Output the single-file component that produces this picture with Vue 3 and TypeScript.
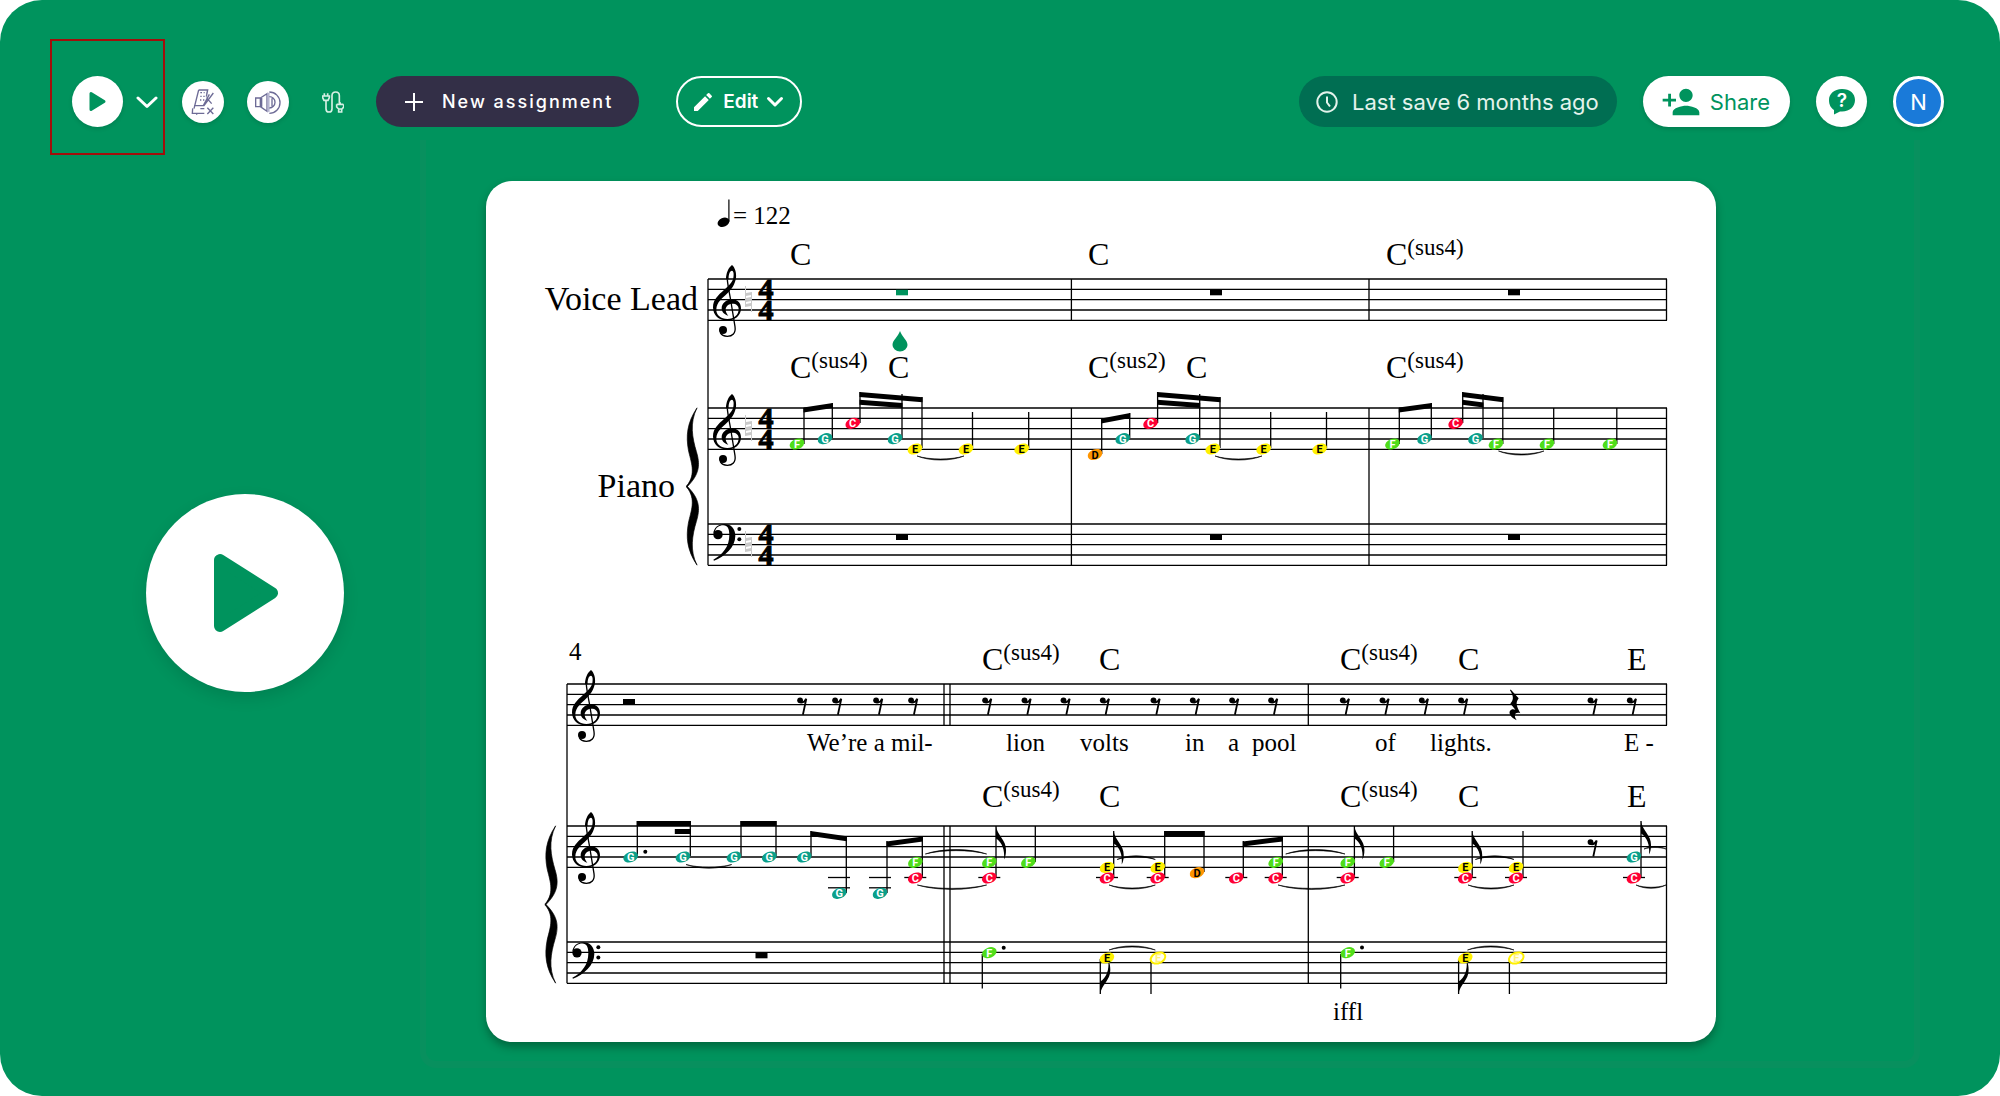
<script setup lang="ts">
type Pitch = 'C' | 'D' | 'E' | 'F' | 'G'
interface Head { p: Pitch; x: number; y: number; hollow?: boolean }
interface Chord { x: number; y: number; root: string; ext?: string }
interface Lyric { x: number; y: number; t: string }
type Seg = [number, number, number, number]

const staves = [
  { x1: 708, x2: 1667, top: 279 },
  { x1: 708, x2: 1667, top: 408 },
  { x1: 708, x2: 1667, top: 524 },
  { x1: 567, x2: 1667, top: 684 },
  { x1: 567, x2: 1667, top: 826 },
  { x1: 567, x2: 1667, top: 942 },
]
const staffGap = 31 / 3
const staffLines: Seg[] = staves.flatMap((s) =>
  [0, 1, 2, 3, 4].map((i): Seg => [s.x1, s.top + i * staffGap, s.x2, s.top + i * staffGap]),
)

const bars: Seg[] = [
  [708, 279, 708, 565.3],
  [567, 684, 567, 983.3],
  ...[1071.4, 1369, 1666.5].flatMap((x): Seg[] => [[x, 279, x, 320.3], [x, 408, x, 565.3]]),
  ...[944, 950, 1308.3, 1666.5].flatMap((x): Seg[] => [[x, 684, x, 725.3], [x, 826, x, 983.3]]),
]

const trebles = [[713, 310], [713, 439], [572, 715], [572, 857]]
const basses = [[713, 534.3], [572, 952.5]]
const ghosts = [286, 415, 531]
const meters = [279, 408, 524]
const braces = [[686.7, 486.5], [545.3, 904.5]]

const wholeRests = [
  { x: 896, y: 289.8, live: true }, { x: 1210, y: 289.8 }, { x: 1508, y: 289.8 },
  { x: 896, y: 534.5 }, { x: 1210, y: 534.5 }, { x: 1508, y: 534.5 },
  { x: 623, y: 699 }, { x: 755.5, y: 952.8 },
]
const eighthRests = [
  797.3, 832.3, 873.3, 908.3, 982.3, 1021.7, 1060.7, 1100, 1150.7, 1190, 1229.3, 1268.3,
  1340, 1379.7, 1419, 1458.3, 1587.7, 1627,
].map((x) => [x, 697.7]).concat([[1587.7, 839.5]])

const heads: Head[] = [
  { p: 'F', x: 797, y: 444 }, { p: 'G', x: 825, y: 438.7 }, { p: 'C', x: 852.7, y: 423.3 },
  { p: 'G', x: 895, y: 438.7 }, { p: 'E', x: 915, y: 449 }, { p: 'E', x: 966, y: 449 }, { p: 'E', x: 1021.7, y: 449 },
  { p: 'D', x: 1095, y: 454.5 }, { p: 'G', x: 1122.7, y: 438.7 }, { p: 'C', x: 1150.5, y: 423.3 },
  { p: 'G', x: 1192.6, y: 438.7 }, { p: 'E', x: 1212.8, y: 449 }, { p: 'E', x: 1263.7, y: 449 }, { p: 'E', x: 1319.7, y: 449 },
  { p: 'F', x: 1392.5, y: 444 }, { p: 'G', x: 1424.5, y: 438.7 }, { p: 'C', x: 1455.6, y: 423.3 },
  { p: 'G', x: 1475.4, y: 438.7 }, { p: 'F', x: 1496, y: 444 }, { p: 'F', x: 1547, y: 444 }, { p: 'F', x: 1610, y: 444 },
  { p: 'G', x: 630.7, y: 857 }, { p: 'G', x: 683, y: 857 }, { p: 'G', x: 734, y: 857 },
  { p: 'G', x: 769.3, y: 857 }, { p: 'G', x: 804.3, y: 857 }, { p: 'G', x: 839.3, y: 893.3 }, { p: 'G', x: 880, y: 893.3 },
  { p: 'F', x: 915.3, y: 862.3 }, { p: 'C', x: 915.3, y: 878 },
  { p: 'F', x: 989.3, y: 862.3 }, { p: 'C', x: 989.3, y: 878 }, { p: 'F', x: 1028.3, y: 862.3 },
  { p: 'E', x: 1107, y: 867.3 }, { p: 'C', x: 1107, y: 878 }, { p: 'E', x: 1157.7, y: 867.3 }, { p: 'C', x: 1157.7, y: 878 },
  { p: 'D', x: 1197, y: 872.7 }, { p: 'C', x: 1236.3, y: 878 }, { p: 'F', x: 1275.7, y: 862.3 }, { p: 'C', x: 1275.7, y: 878 },
  { p: 'F', x: 1347.7, y: 862.3 }, { p: 'C', x: 1347.7, y: 878 }, { p: 'F', x: 1386.7, y: 862.3 },
  { p: 'E', x: 1465.3, y: 867.3 }, { p: 'C', x: 1465.3, y: 878 }, { p: 'E', x: 1516, y: 867.3 }, { p: 'C', x: 1516, y: 878 },
  { p: 'G', x: 1634, y: 857 }, { p: 'C', x: 1634, y: 878 },
  { p: 'F', x: 989.3, y: 952.7 }, { p: 'E', x: 1107, y: 958 }, { p: 'E', x: 1158, y: 958, hollow: true },
  { p: 'F', x: 1347.7, y: 952.7 }, { p: 'E', x: 1465.3, y: 958 }, { p: 'E', x: 1516.3, y: 958, hollow: true },
]

// x, start y, end y
const stems: [number, number, number][] = [
  [804, 444, 408], [832.3, 438, 403], [860, 423, 392], [902, 438, 394], [922, 448, 397], [972.5, 448, 412], [1028.7, 448, 412],
  [1101.7, 454, 419], [1129.7, 438, 413], [1157.6, 423, 392], [1199.7, 438, 394], [1220, 448, 397], [1270.7, 448, 412], [1326.5, 448, 412],
  [1399.3, 444, 408], [1431.3, 438, 403], [1462.7, 423, 392], [1483, 438, 394], [1502.8, 444, 397], [1553.7, 444, 408], [1616.8, 444, 408],
  [637.3, 856, 821], [690.3, 856, 821], [741, 856, 821], [776, 856, 821], [811, 856, 831], [846.3, 893, 836], [887, 893, 841], [922.3, 878, 836],
  [996, 878, 826], [1035.3, 862, 826], [1113.7, 878, 831], [1164.7, 878, 831], [1204, 872, 831], [1243.3, 878, 841], [1282.3, 878, 836],
  [1354.4, 878, 826], [1393.6, 862, 826], [1472.2, 878, 831], [1523, 878, 831], [1641, 878, 821],
  [982.3, 954, 988.5], [1100.3, 959, 994], [1151, 959, 994], [1340.7, 954, 988.5], [1458.6, 959, 994], [1509.4, 959, 994],
]
const beams: Seg[] = [
  [804, 407.5, 832.3, 403], [860, 392, 922, 397.2], [860, 399.7, 902, 403],
  [1101.7, 418.5, 1129.7, 413], [1157.6, 392, 1220, 397.2], [1157.6, 399.7, 1199.7, 403],
  [1399.3, 407.5, 1431.3, 403], [1462.7, 392, 1502.8, 397.2], [1462.7, 399.7, 1483, 402.5],
  [637.3, 821, 690.3, 821], [675.3, 829, 690.3, 829], [741, 821, 776, 821],
  [811, 831, 846.3, 836.3], [887, 841.5, 922.3, 836.5],
  [1164.7, 831, 1204, 831], [1243.3, 841.5, 1282.3, 836.5],
]
const beam = ([a, b, c, d]: Seg): string => `M${a - 0.5},${b} L${c + 0.5},${d} V${d + 5} L${a - 0.5},${b + 5}Z`

const ledgers: [number, number, number][] = [
  [828, 850, 877.5], [828, 850, 887.8], [869, 891, 877.5], [869, 891, 887.8],
  ...[915.3, 989.3, 1107, 1157.7, 1236.3, 1275.7, 1347.7, 1465.3, 1516, 1634].map(
    (x): [number, number, number] => [x - 11, x + 11, 877.5],
  ),
]

// x1, x2, y, bow height (negative bows upwards)
const ties: Seg[] = [
  [917, 964, 456, 4], [1215, 1262, 456, 4], [1498.5, 1544, 451, 4],
  [686, 731.7, 864.5, 3.5], [925.3, 986.7, 854, -4.5], [917.3, 986.7, 885, 4.5],
  [1117, 1155.3, 859.5, -3.5], [1109, 1155.3, 885, 4],
  [1285.7, 1345, 854, -4.5], [1278, 1345, 885, 4.5],
  [1475.3, 1514, 859.5, -3.5], [1468, 1514, 885, 4],
  [1644, 1666, 849, -2], [1636, 1666, 885, 3],
  [1109, 1155.3, 950, -4], [1467.5, 1514, 950, -4],
]
const tie = ([a, c, y, h]: Seg): string => {
  const o = h
  const i = h + (h > 0 ? 1.4 : -1.4)
  const d = (c - a) * 0.28
  return `M${a},${y} C${a + d},${y + o} ${c - d},${y + o} ${c},${y} C${c - d},${y + i} ${a + d},${y + i} ${a},${y}Z`
}

const flagsUp = [[996, 826], [1113.7, 831], [1354.4, 826], [1472.2, 831], [1641, 821]]
const flagsDown = [[1100.3, 994], [1458.6, 994]]
const dots = [[645.3, 851.7], [1003.7, 947.7], [1362, 947.5]]

const chords: Chord[] = [
  { x: 790, y: 265, root: 'C' }, { x: 1088, y: 265, root: 'C' }, { x: 1386, y: 265, root: 'C', ext: '(sus4)' },
  { x: 790, y: 378, root: 'C', ext: '(sus4)' }, { x: 888, y: 378, root: 'C' },
  { x: 1088, y: 378, root: 'C', ext: '(sus2)' }, { x: 1186, y: 378, root: 'C' }, { x: 1386, y: 378, root: 'C', ext: '(sus4)' },
  ...[670, 807].flatMap((y): Chord[] => [
    { x: 982, y, root: 'C', ext: '(sus4)' }, { x: 1099, y, root: 'C' },
    { x: 1340, y, root: 'C', ext: '(sus4)' }, { x: 1458, y, root: 'C' }, { x: 1627, y, root: 'E' },
  ]),
]
const lyrics: Lyric[] = [
  { x: 733, y: 224, t: '= 122' }, { x: 569, y: 660, t: '4' },
  { x: 807, y: 751, t: 'We’re a mil-' }, { x: 1006, y: 751, t: 'lion' }, { x: 1080, y: 751, t: 'volts' },
  { x: 1185, y: 751, t: 'in' }, { x: 1228, y: 751, t: 'a' }, { x: 1252, y: 751, t: 'pool' },
  { x: 1375, y: 751, t: 'of' }, { x: 1430, y: 751, t: 'lights.' }, { x: 1624, y: 751, t: 'E -' },
  { x: 1333, y: 1020, t: 'iffl' },
]
</script>

<template>
  <main class="shell">
    <header class="toolbar">
      <div class="play-group">
        <button class="round play" type="button" aria-label="Play">
          <svg viewBox="0 0 51 51"><path d="M19 17.500v16l13 -8z" /></svg>
        </button>
        <button class="bare" type="button" aria-label="Playback options">
          <svg width="22" height="22" viewBox="0 0 22 22"><path d="M2 7l9 8.500L20 7" class="line" /></svg>
        </button>
      </div>
      <button class="round small" type="button" aria-label="Metronome">
        <svg viewBox="546 240 126 126" class="ink">
          <path d="M596 267h27l-3 12M596 267l-14 56M623 267l-4 20M582 314h30l28-38M610 314l18-34M578 322l-1 15h36M590 337v4M601 323h12M601 275h5M611 275h3M601 286h4M610 286h4M600 297h4M609 297h4M622 320l18 19M640 320l-18 19M619 290l16 18" />
        </svg>
      </button>
      <button class="round small" type="button" aria-label="Sound">
        <svg viewBox="743 240 126 126" class="ink">
          <path d="M769 291h14v26h-14zM783 291l20-13v53l-20-14M787 291v26" />
          <path d="M804 276h6v56h-6z" class="tint" />
          <path d="M810 287a17 17 0 0 1 0 34M818 292v24" />
          <path d="M810 273a31 31 0 0 1 0 64" />
        </svg>
      </button>
      <button class="bare cable" type="button" aria-label="Audio connection">
        <svg width="22" height="22" viewBox="0 0 66 66">
          <path d="M7 7v8M17 7v8M2 15h20v5l-4 8h-12l-4-8zM12 28v25q0 10 9 10t9-10V14q0-11 11-11t11 11v22M44 40h20M44 40v8l6 6h10l5-6v-8M50 54v9h9v-9M50 36h7" />
        </svg>
      </button>
      <button class="pill dark" type="button">
        <svg width="20" height="20" viewBox="0 0 20 20"><path d="M10 1v18M1 10h18" /></svg>
        <span>New assignment</span>
      </button>
      <button class="pill outline" type="button">
        <svg width="24" height="24" viewBox="0 0 24 24"><path d="M3 17.250V21h3.750L17.810 9.940l-3.750-3.750L3 17.250zM20.710 7.040a1 1 0 000-1.410l-2.340-2.340a1 1 0 00-1.410 0l-1.830 1.830 3.750 3.750 1.830-1.830z" fill="#fff" /></svg>
        <span>Edit</span>
        <svg width="18" height="18" viewBox="0 0 18 18"><path d="M2.500 5.500L9 12l6.500-6.500" class="line" /></svg>
      </button>

      <div class="right">
        <div class="pill save">
          <svg width="24" height="24" viewBox="0 0 24 24"><circle cx="12" cy="12" r="9.700" /><path d="M12 6.500v6l3 4" /></svg>
          <span>Last save 6 months ago</span>
        </div>
        <button class="pill share" type="button">
          <svg width="40" height="40" viewBox="0 0 24 24"><path d="M15 12c2.210 0 4-1.790 4-4s-1.790-4-4-4-4 1.790-4 4 1.790 4 4 4zm-9-2V7H4.300v3H1v1.700h3.300v3H6v-3h3V10H6zm9 4.200c-2.670 0-8 1.340-8 4V20h16v-1.800c0-2.660-5.330-4-8-4z" /></svg>
          <span>Share</span>
        </button>
        <button class="round help" type="button" aria-label="Help">
          <svg viewBox="0 0 51 51">
            <path d="M26 13c-8 0-13 5-13 11 0 5 2 8 5 10v4.500l6-3h2c8 0 13-5 13-11.500S34 13 26 13z" />
            <text x="26" y="31" text-anchor="middle">?</text>
          </svg>
        </button>
        <button class="round avatar" type="button">N</button>
      </div>
    </header>

    <section class="stage">
      <div class="side">
        <button class="round big" type="button" aria-label="Play score">
          <svg viewBox="0 0 198 198"><path d="M74 66v66l52-33z" /></svg>
        </button>
      </div>
      <article class="sheet">
        <svg class="score" viewBox="486 181 1230 861" role="img" aria-label="Voice Lead and Piano score">
          <defs>
            <g id="treble">
              <path d="M57,-135 C66,-128 71,-110 69,-97 C66,-76 55,-62 44,-51 C28,-35 11,-24 10,-2 C9,16 24,27 43,27 C64,27 77,14 77,-3 C77,-13 69,-19 59,-19 C46,-19 38,-11 38,-1 C38,6 42,12 46,17 C34,14 26,6 26,-5 C26,-20 40,-32 58,-32 C73,-32 84,-21 84,-5 C84,17 66,32 42,32 C18,32 0,16 0,-8 C0,-32 18,-46 32,-59 C46,-72 58,-82 61,-96 C63,-108 62,-117 57,-118 C50,-118 46,-105 47,-92 L39,-92 C39,-110 46,-127 57,-135Z" />
              <path d="M43,-92 C44,-75 50,-48 53,-30 L66,50 C69,70 58,79 43,79 C32,79 25,74 22,68" fill="none" stroke="#000" stroke-width="4" />
              <circle cx="30" cy="60" r="12" />
            </g>
            <g id="bass">
              <path d="M1,-2 C2,-20 16,-31 34,-31 C54,-31 67,-17 67,4 C67,40 35,66 3,79 L1,76 C30,60 49,36 49,2 C49,-16 44,-27 31,-27 C18,-27 8,-20 6,-8Z" />
              <circle cx="15" cy="1" r="14" /><circle cx="79" cy="-16" r="6" /><circle cx="79" cy="15" r="6" />
            </g>
            <path id="half-brace" d="M31,-236 C0,-190 -2,-150 5,-110 C12,-75 30,-38 0,-2 L0,2 C41,-38 40,-68 29,-105 C17,-145 8,-190 31,-236Z" stroke="#000" stroke-width="2" />
            <g id="eighth">
              <circle cx="2.800" cy="2.600" r="2.900" />
              <path d="M2,4.200 Q6.500,6.200 9,1 L5.600,17" fill="none" stroke="#000" stroke-width="1.800" />
            </g>
            <path id="flag" d="M0,0 C1,9 10.300,14 10,24 C10,28 9.500,31 8,33.500 C9,24 6,16 0,12.500Z" />
            <path id="ghost" d="M0,0h1v7l6,-1v20h-1v-6l-6,1zM1,10v2l5,-1v-2zM1,16v2l5,-1v-2z" />
          </defs>

          <g class="lines">
            <line v-for="(l, i) in staffLines" :key="'s' + i" :x1="l[0]" :y1="l[1]" :x2="l[2]" :y2="l[3]" />
            <line v-for="(l, i) in bars" :key="'b' + i" :x1="l[0]" :y1="l[1]" :x2="l[2]" :y2="l[3]" />
            <line v-for="(l, i) in ledgers" :key="'l' + i" :x1="l[0]" :y1="l[2]" :x2="l[1]" :y2="l[2]" />
            <line v-for="(s, i) in stems" :key="'t' + i" :x1="s[0]" :y1="s[1]" :x2="s[0]" :y2="s[2]" />
          </g>

          <use v-for="(g, i) in ghosts" :key="'g' + i" href="#ghost" :x="745" :y="g" fill="#c9c9c9" />
          <use v-for="(t, i) in trebles" :key="'c' + i" href="#treble" :transform="`translate(${t[0]} ${t[1]}) scale(.3333)`" />
          <use v-for="(t, i) in basses" :key="'f' + i" href="#bass" :transform="`translate(${t[0]} ${t[1]}) scale(.3333)`" />
          <g v-for="(b, i) in braces" :key="'r' + i">
            <use href="#half-brace" :transform="`translate(${b[0]} ${b[1]}) scale(.3333)`" />
            <use href="#half-brace" :transform="`translate(${b[0]} ${b[1]}) scale(.3333 -.3333)`" />
          </g>
          <g class="meter">
            <text v-for="(m, i) in meters" :key="'m' + i"><tspan x="766" :y="m + 20">4</tspan><tspan x="766" :y="m + 41">4</tspan></text>
          </g>

          <rect v-for="(r, i) in wholeRests" :key="'w' + i" :x="r.x" :y="r.y" width="12" height="5.500" :class="{ live: r.live }" />
          <use v-for="(r, i) in eighthRests" :key="'e' + i" href="#eighth" :x="r[0]" :y="r[1]" />
          <path transform="translate(1509 689.500) scale(.3333)" d="M5,0 L29,26 C19,40 22,48 34,71 C19,66 12,76 23,92 C4,84 -6,66 8,60 C12,59 17,60 19,61 L4,42 C18,28 10,14 3,2Z" />
          <path class="live" d="M900,331 C902,337 907.500,340 907.500,345 A7.500,6.500 0 0 1 892.500,345 C892.500,340 898,337 900,331Z" />

          <path v-for="(b, i) in beams" :key="'q' + i" :d="beam(b)" />
          <path v-for="(t, i) in ties" :key="'i' + i" class="tie" :d="tie(t)" />
          <use v-for="(f, i) in flagsUp" :key="'u' + i" href="#flag" :x="f[0]" :y="f[1]" />
          <use v-for="(f, i) in flagsDown" :key="'d' + i" href="#flag" :transform="`translate(${f[0]} ${f[1]}) scale(1 -1)`" />
          <circle v-for="(d, i) in dots" :key="'o' + i" :cx="d[0]" :cy="d[1]" r="2" />

          <g v-for="(h, i) in heads" :key="'h' + i" :class="['head', 'n' + h.p, { hollow: h.hollow }]">
            <ellipse :cx="h.x" :cy="h.y" rx="7.600" ry="5.200" :transform="`rotate(-22 ${h.x} ${h.y})`" />
            <text :x="h.x" :y="h.y + 4">{{ h.p }}</text>
          </g>

          <ellipse cx="723.500" cy="222.300" rx="6.200" ry="4.400" transform="rotate(-24 723.500 222.300)" />
          <path d="M728.300,199.500h1.200v22h-1.200z" />

          <text class="part" x="698" y="310">Voice Lead</text>
          <text class="part" x="675" y="497">Piano</text>
          <text v-for="(c, i) in chords" :key="'k' + i" class="chord" :x="c.x" :y="c.y">{{ c.root }}<tspan v-if="c.ext" class="ext" dy="-10">{{ c.ext }}</tspan></text>
          <text v-for="(l, i) in lyrics" :key="'y' + i" class="lyric" :x="l.x" :y="l.y">{{ l.t }}</text>
        </svg>
      </article>
    </section>
  </main>
</template>

<style>
body {
  margin: 0;
  background: #fff;
}
</style>

<style scoped>
.shell {
  position: relative;
  box-sizing: border-box;
  min-height: 100vh;
  padding: 76px 0 54px;
  border-radius: 42px;
  background: #00935d;
  font-family: Inter, "Liberation Sans", sans-serif;
  color: #fff;
}
.shell::before {
  content: "";
  position: absolute;
  top: 140px;
  bottom: 28px;
  left: 21%;
  right: 4%;
  border: solid rgba(80, 120, 110, 0.1);
  border-width: 0 6px 7px;
  border-radius: 0 0 16px 16px;
  pointer-events: none;
}
button {
  margin: 0;
  padding: 0;
  border: 0;
  background: none;
  color: inherit;
  font: inherit;
  cursor: pointer;
}
svg {
  display: block;
  flex: none;
}
.toolbar {
  display: flex;
  align-items: center;
  height: 51px;
  padding: 0 56px 0 72px;
}
.play-group {
  position: relative;
  display: flex;
  align-items: center;
  gap: 13px;
  margin-right: 24px;
}
.play-group::after {
  content: "";
  position: absolute;
  inset: -37px -7px -28px -22px;
  border: 2px solid #a30e0b;
  pointer-events: none;
}
.round {
  display: flex;
  align-items: center;
  justify-content: center;
  box-sizing: border-box;
  width: 51px;
  height: 51px;
  border-radius: 50%;
  background: #fff;
  box-shadow: 0 2px 4px rgba(0, 0, 0, 0.12);
  flex: none;
}
.round svg {
  width: 100%;
  height: 100%;
}
.play path,
.big path {
  fill: #00935d;
  stroke: #00935d;
  stroke-linejoin: round;
}
.play path {
  stroke-width: 3px;
}
.big path {
  stroke-width: 12px;
}
.line {
  fill: none;
  stroke: #fff;
  stroke-width: 3px;
  stroke-linecap: round;
  stroke-linejoin: round;
}
.small {
  width: 42px;
  height: 42px;
  margin-right: 23px;
}
.ink path {
  fill: none;
  stroke: #6d6b96;
  stroke-width: 4px;
}
.ink .tint {
  fill: #b9b8d2;
  stroke: #a3a2c2;
  stroke-width: 1px;
}
.cable {
  margin: 0 32px 0 10px;
}
.cable path {
  fill: none;
  stroke: #d5f0e4;
  stroke-width: 5px;
}
.pill {
  display: flex;
  align-items: center;
  box-sizing: border-box;
  height: 51px;
  border-radius: 26px;
  white-space: nowrap;
}
.pill.dark {
  gap: 18px;
  margin-right: 37px;
  padding: 0 26px 0 28px;
  background: #332f47;
  font-size: 18px;
  font-weight: 500;
  letter-spacing: 2px;
}
.dark path {
  fill: none;
  stroke: #fff;
  stroke-width: 2px;
}
.pill.outline {
  gap: 8px;
  padding: 0 16px 0 13px;
  border: 2px solid #fff;
  font-size: 19px;
  font-weight: 600;
}
.right {
  display: flex;
  gap: 26px;
  margin-left: auto;
  font-size: 22px;
}
.save {
  gap: 13px;
  padding: 0 18px 0 16px;
  background: #006e52;
  color: #e4f3ec;
}
.save circle,
.save path {
  fill: none;
  stroke: #e4f3ec;
  stroke-width: 2px;
}
.pill.share {
  gap: 9px;
  padding: 0 20px 0 18px;
  background: #fff;
  box-shadow: 0 2px 4px rgba(0, 0, 0, 0.15);
  color: #00935d;
}
.share path,
.help path {
  fill: #00935d;
}
.help text {
  fill: #fff;
  font-size: 19px;
  font-weight: 600;
}
.round.avatar {
  border: 3px solid #fff;
  background: #1a7ad9;
}
.stage {
  display: grid;
  grid-template-columns: 486fr 1230fr 284fr;
  margin-top: 54px;
}
.side {
  display: flex;
  align-items: center;
  justify-content: center;
  padding: 0 0 37px 4px;
}
.big {
  width: 198px;
  height: 198px;
  box-shadow: 0 6px 16px rgba(0, 0, 0, 0.12);
}
.sheet {
  border-radius: 26px;
  background: #fff;
  box-shadow: 0 5px 9px rgba(0, 40, 20, 0.4);
}
.score {
  width: 100%;
  height: auto;
  font-family: "Liberation Serif", serif;
}
.lines line {
  stroke: #000;
  stroke-width: 1.300px;
}
.live {
  fill: #00935d;
}
.tie {
  stroke: #000;
  stroke-width: 0.600px;
}
.meter text {
  text-anchor: middle;
  font-size: 30px;
  font-weight: 700;
  stroke: #000;
  stroke-width: 1px;
}
.part {
  text-anchor: end;
  font-size: 34px;
}
.chord {
  font-size: 32px;
}
.ext {
  font-size: 23px;
}
.lyric {
  font-size: 25px;
}
.head text {
  text-anchor: middle;
  font: 700 11px Roboto, sans-serif;
  fill: #fff;
}
.nC ellipse { fill: #ff0033; }
.nD ellipse { fill: #ff9500; }
.nE ellipse { fill: #fff000; }
.nF ellipse { fill: #4fdd1a; }
.nG ellipse { fill: #0b9f89; }
.nD text,
.nE text { fill: #000; }
.hollow ellipse {
  fill: #fffef0;
  stroke: #fff000;
  stroke-width: 2px;
}
.hollow text { fill: #fff27a; }
</style>
